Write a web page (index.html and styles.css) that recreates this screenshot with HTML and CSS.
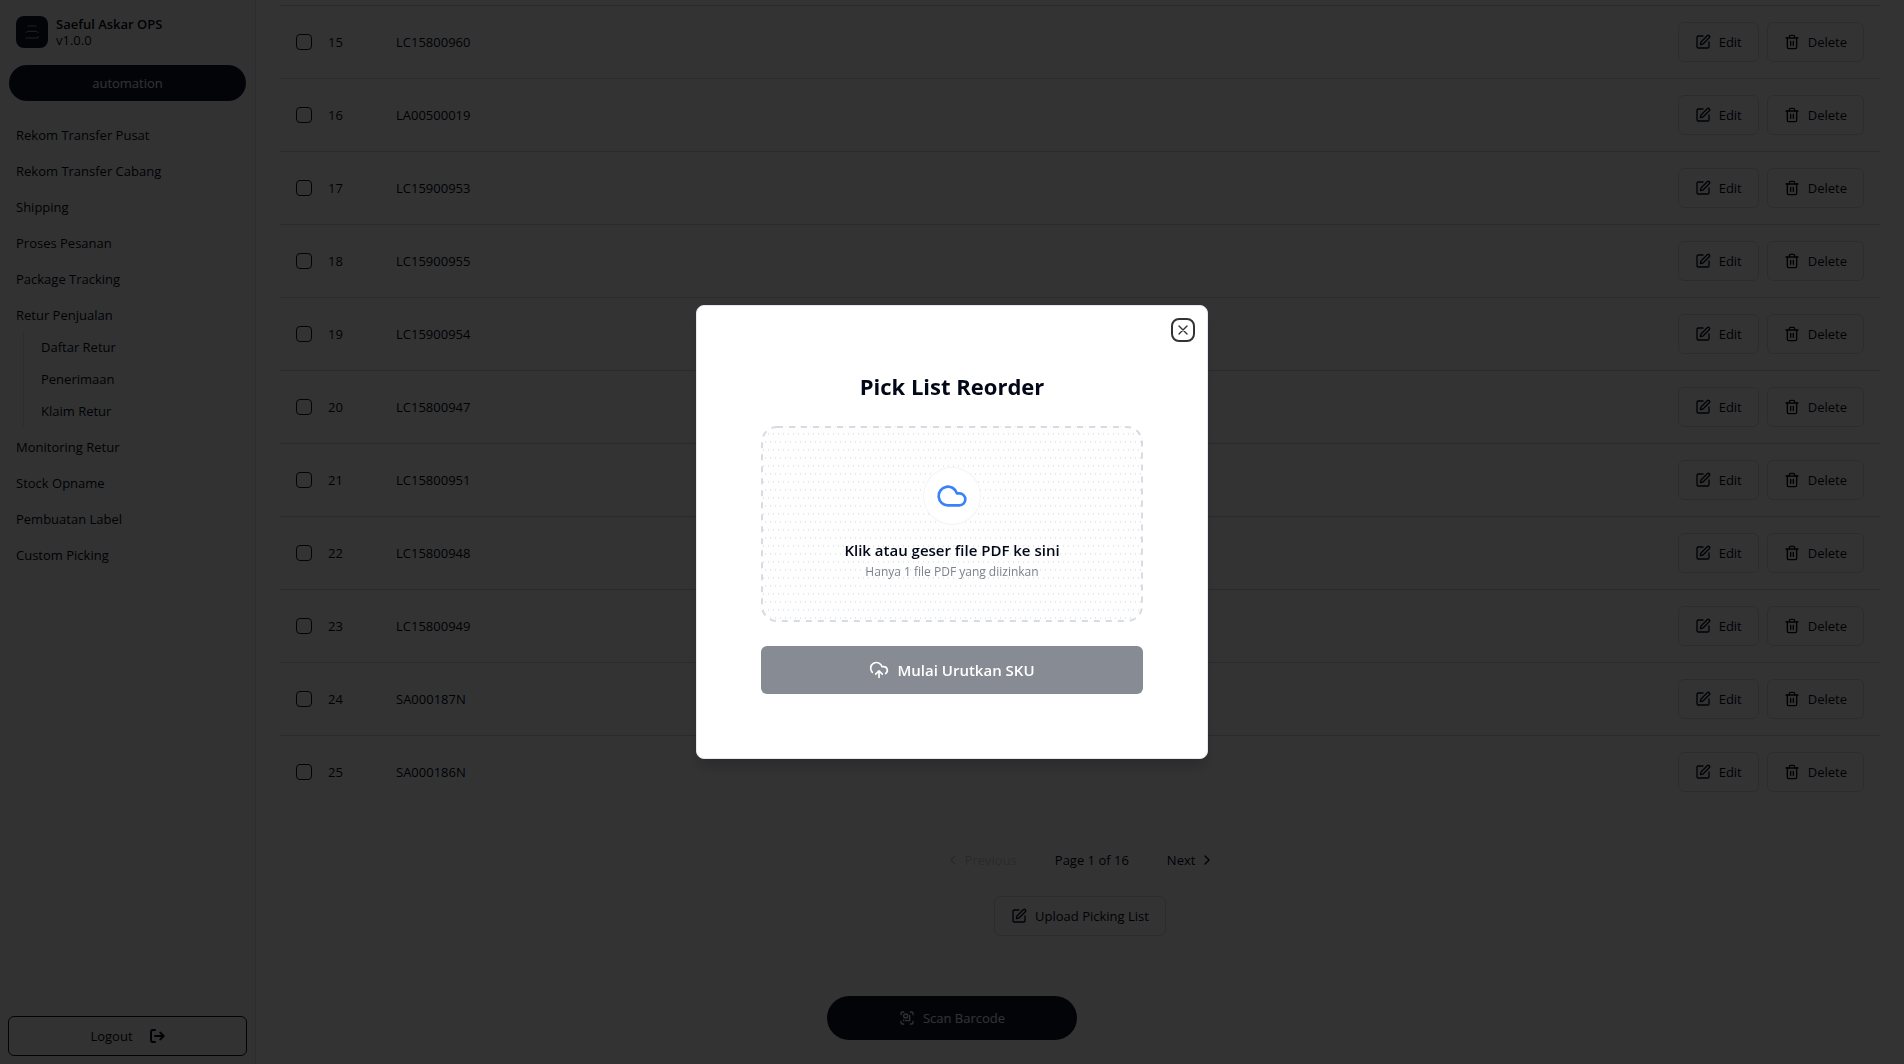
FILE: index.html
```html
<!DOCTYPE html>
<html lang="id">
<head>
    <meta charset="UTF-8">
    <meta name="viewport" content="width=device-width, initial-scale=1.0">
    <title>Saeful Askar OPS</title>
    <link rel="stylesheet" href="styles.css">
</head>
<body>

    <!-- Shared icons -->
    <svg class="sprite" aria-hidden="true">
        <symbol id="icon-edit" viewBox="0 0 24 24">
            <path d="M12 3H5a2 2 0 0 0-2 2v14a2 2 0 0 0 2 2h14a2 2 0 0 0 2-2v-7"/>
            <path d="M18.375 2.625a1 1 0 0 1 3 3l-9.013 9.014a2 2 0 0 1-.853.505l-2.873.84a.5.5 0 0 1-.62-.62l.84-2.873a2 2 0 0 1 .506-.852z"/>
        </symbol>
        <symbol id="icon-trash" viewBox="0 0 24 24">
            <path d="M3 6h18"/>
            <path d="M19 6v14c0 1-1 2-2 2H7c-1 0-2-1-2-2V6"/>
            <path d="M8 6V4c0-1 1-2 2-2h4c1 0 2 1 2 2v2"/>
            <path d="M10 11v6M14 11v6"/>
        </symbol>
    </svg>

    <div class="layout">
        <aside class="sidebar">
            <div class="brand">
                <div class="brand-icon">
                    <svg class="icon" viewBox="0 0 24 24"><path d="M6 3h12M3 13l2-2h14l2 2M3 21h18v-2"/></svg>
                </div>
                <div class="brand-text">
                    <span class="brand-name">Saeful Askar OPS</span>
                    <span>v1.0.0</span>
                </div>
            </div>
            <button type="button" class="role-btn">automation</button>

            <nav class="menu">
                <a href="#">Rekom Transfer Pusat</a>
                <a href="#">Rekom Transfer Cabang</a>
                <a href="#">Shipping</a>
                <a href="#">Proses Pesanan</a>
                <a href="#">Package Tracking</a>
                <a href="#">Retur Penjualan</a>
                <div class="submenu">
                    <a href="#">Daftar Retur</a>
                    <a href="#">Penerimaan</a>
                    <a href="#">Klaim Retur</a>
                </div>
                <a href="#">Monitoring Retur</a>
                <a href="#">Stock Opname</a>
                <a href="#">Pembuatan Label</a>
                <a href="#" class="active">Custom Picking</a>
            </nav>

            <button type="button" class="logout-btn">
                Logout
                <svg class="icon icon-bold" viewBox="0 0 24 24"><path d="M9 3H6a3 3 0 0 0-3 3v12a3 3 0 0 0 3 3h3M9 12h13M17 7l5 5-5 5"/></svg>
            </button>
        </aside>

        <main class="content">
            <table class="sku-table">
                <tbody id="sku-rows"></tbody>
            </table>

            <div class="pagination">
                <button type="button" class="page-btn" disabled>
                    <svg class="icon" viewBox="0 0 24 24"><path d="m15 18-6-6 6-6"/></svg>
                    Previous
                </button>
                <span class="page-info">Page 1 of 16</span>
                <button type="button" class="page-btn">
                    Next
                    <svg class="icon" viewBox="0 0 24 24"><path d="m9 18 6-6-6-6"/></svg>
                </button>
            </div>

            <button type="button" class="btn btn-medium upload-btn">
                <svg class="icon"><use href="#icon-edit"/></svg>
                Upload Picking List
            </button>
        </main>
    </div>

    <button type="button" class="scan-btn">
        <svg class="icon" viewBox="0 0 24 24">
            <path d="M3 7V5a2 2 0 0 1 2-2h2M17 3h2a2 2 0 0 1 2 2v2M21 17v2a2 2 0 0 1-2 2h-2M7 21H5a2 2 0 0 1-2-2v-2"/>
            <circle cx="10" cy="9" r="3"/>
            <path d="M16 8v8h-6M7 15v1"/>
        </svg>
        Scan Barcode
    </button>

    <!-- Modal -->
    <div class="overlay">
        <div class="modal" role="dialog" aria-modal="true" aria-labelledby="modal-title">
            <button type="button" class="close" aria-label="Close">
                <svg class="icon" viewBox="0 0 24 24"><path d="M18 6 6 18M6 6l12 12"/></svg>
            </button>
            <h2 id="modal-title">Pick List Reorder</h2>
            <label class="dropzone" for="pdf-file">
                <svg class="dash-border" aria-hidden="true"><rect/></svg>
                <span class="cloud">
                    <svg class="icon" viewBox="0 0 24 24"><path d="M17.5 19H9a7 7 0 1 1 6.71-9h1.79a4.5 4.5 0 1 1 0 9Z"/></svg>
                </span>
                <span class="drop-title">Klik atau geser file PDF ke sini</span>
                <span class="drop-hint">Hanya 1 file PDF yang diizinkan</span>
                <input type="file" id="pdf-file" accept="application/pdf" hidden>
            </label>
            <button type="button" class="submit-btn" disabled>
                <svg class="icon" viewBox="0 0 24 24"><path d="M12 13v8M4 14.899A7 7 0 1 1 15.71 8h1.79a4.5 4.5 0 0 1 2.5 8.242M8 17l4-4 4 4"/></svg>
                Mulai Urutkan SKU
            </button>
        </div>
    </div>

    <script src="script.js"></script>
</body>
</html>
```
FILE: styles.css
```css
* {
    box-sizing: border-box;
}
body {
    font-family: "Open Sans", "Noto Sans", sans-serif;
    font-size: 13px;
    line-height: 20px;
    margin: 0;
    color: #020817;
    background-color: #fff;
}
button {
    font: inherit;
    color: inherit;
    cursor: pointer;
}
a {
    color: inherit;
    text-decoration: none;
}
.sprite {
    display: none;
}
.icon {
    width: 16px;
    height: 16px;
    flex: none;
    fill: none;
    stroke: currentColor;
    stroke-width: 2;
    stroke-linecap: round;
    stroke-linejoin: round;
}
.icon-bold {
    stroke-width: 3;
}
.layout {
    display: flex;
    height: 100vh;
    overflow: hidden;
}

/* Sidebar */
.sidebar {
    width: 256px;
    flex: none;
    display: flex;
    flex-direction: column;
    padding: 8px;
    background-color: #fafafa;
    border-right: 1px solid #dcdfe4;
}
.brand {
    display: flex;
    align-items: center;
    gap: 8px;
    padding: 8px;
}
.brand-icon {
    width: 32px;
    height: 32px;
    display: flex;
    align-items: center;
    justify-content: center;
    background-color: #0f172a;
    color: #fafafa;
    border-radius: 8px;
}
.brand-icon .icon {
    stroke-width: 1;
}
.brand-text {
    display: flex;
    flex-direction: column;
    line-height: 16px;
}
.brand-name {
    font-weight: 600;
}
.role-btn {
    height: 36px;
    margin: 9px 1px 18px;
    border: none;
    border-radius: 18px;
    background-color: #0f172a;
    color: #f8fafc;
}
.menu {
    flex: 1;
    display: flex;
    flex-direction: column;
    gap: 4px;
}
.menu a {
    padding: 6px 8px;
    border-radius: 6px;
}
.menu .active {
    background-color: #f8f8f8;
    font-weight: 500;
}
.submenu {
    display: flex;
    flex-direction: column;
    gap: 4px;
    margin: -4px 15px 0;
    padding: 2px 9px;
    border-left: 1px solid #dcdfe4;
}
.menu .submenu a {
    padding: 4px 8px;
}
.logout-btn {
    height: 40px;
    display: flex;
    align-items: center;
    justify-content: center;
    gap: 16px;
    background: none;
    border: 1px solid #0f172a;
    border-radius: 6px;
}

/* Table */
.content {
    flex: 1;
    display: flex;
    flex-direction: column;
    align-items: center;
    padding: 5px 24px 24px;
}
.sku-table {
    width: 100%;
    border-collapse: separate;
    border-spacing: 0;
    border-top: 1px solid #d3d7dd;
}
.sku-table td {
    height: 73px;
    padding: 0 16px 0 0;
    border-bottom: 1px solid #d3d7dd;
}
.sku-table tr:last-child td {
    height: 72px;
    border-bottom: none;
}
.sku-table .cell-check {
    width: 48px;
    padding-left: 16px;
}
.sku-table .cell-no {
    width: 68px;
}
.sku-table .cell-sku {
    font-weight: 500;
}
.sku-check {
    appearance: none;
    display: block;
    width: 16px;
    height: 16px;
    margin: 0;
    border: 1px solid #0f172a;
    border-radius: 4px;
}
.actions {
    display: flex;
    justify-content: flex-end;
    gap: 8px;
}
.btn {
    height: 40px;
    display: flex;
    align-items: center;
    gap: 8px;
    padding: 0 16px;
    background-color: #fff;
    border: 1px solid #d8dce2;
    border-radius: 6px;
}
.btn-medium {
    font-weight: 500;
}

/* Pagination */
.pagination {
    display: flex;
    align-items: center;
    gap: 22px;
    margin: 32px 0 16px;
}
.page-btn {
    height: 40px;
    display: flex;
    align-items: center;
    gap: 4px;
    padding: 0 16px;
    background: none;
    border: none;
}
.page-btn:disabled {
    opacity: 0.2;
}
.scan-btn {
    position: fixed;
    left: 50%;
    bottom: 24px;
    transform: translateX(-50%);
    width: 250px;
    height: 44px;
    display: flex;
    align-items: center;
    justify-content: center;
    gap: 8px;
    border: none;
    border-radius: 22px;
    background-color: #0f172a;
    color: #f8fafc;
}

/* Modal */
.overlay {
    position: fixed;
    inset: 0;
    display: flex;
    align-items: center;
    justify-content: center;
    background-color: rgba(0, 0, 0, 0.8);
}
.modal {
    position: relative;
    width: 100%;
    max-width: 512px;
    padding: 64px;
    background-color: #fff;
    border: 1px solid #e2e8f0;
    border-radius: 8px;
    box-shadow: 0 10px 15px -3px rgba(0, 0, 0, 0.2);
}
.close {
    position: absolute;
    top: 16px;
    right: 16px;
    display: flex;
    padding: 0;
    border: none;
    border-radius: 4px;
    background: none;
    color: #333;
    outline: 2px solid #333;
    outline-offset: 2px;
}
.modal h2 {
    margin: 0 0 24px;
    font-size: 22px;
    line-height: 32px;
    font-weight: 700;
    text-align: center;
}
.dropzone {
    position: relative;
    display: flex;
    flex-direction: column;
    align-items: center;
    padding: 42px 16px 40px;
    border-radius: 16px;
    background-color: #fefefe;
    background-image: radial-gradient(circle, #e6e9ee 0.5px, transparent 1px), radial-gradient(circle, #e6e9ee 0.5px, transparent 1px);
    background-size: 5px 16px;
    background-position: 0 0, 2px 8px;
    cursor: pointer;
}
.dash-border {
    position: absolute;
    inset: 0;
    width: 100%;
    height: 100%;
}
.dash-border rect {
    x: 1px;
    y: 1px;
    width: calc(100% - 2px);
    height: calc(100% - 2px);
    rx: 15px;
    fill: none;
    stroke: #d7dbe2;
    stroke-width: 2;
    stroke-dasharray: 6 6;
}
.cloud {
    display: flex;
    padding: 12px;
    margin-bottom: 14px;
    border-radius: 50%;
    background-color: #fff;
    box-shadow: 0 0 0 1px #f3f4f6;
    color: #3b82f6;
}
.cloud .icon {
    width: 32px;
    height: 32px;
}
.drop-title {
    font-size: 15px;
    line-height: 24px;
    font-weight: 600;
}
.drop-hint {
    font-size: 12px;
    line-height: 20px;
    color: #7c828d;
}
.submit-btn {
    width: 100%;
    height: 48px;
    display: flex;
    align-items: center;
    justify-content: center;
    gap: 8px;
    margin-top: 24px;
    border: none;
    border-radius: 6px;
    background-color: #878b93;
    color: #fff;
    font-size: 15px;
    font-weight: 600;
}
.submit-btn .icon {
    width: 20px;
    height: 20px;
}
```
FILE: script.js
```javascript
const skus = [
    "LC15800960", "LA00500019", "LC15900953", "LC15900955", "LC15900954", "LC15800947",
    "LC15800951", "LC15800948", "LC15800949", "SA000187N", "SA000186N"
];
const firstNumber = 15;

document.getElementById("sku-rows").innerHTML = skus.map((sku, i) => `
    <tr>
        <td class="cell-check"><input type="checkbox" class="sku-check" aria-label="Pilih ${sku}"></td>
        <td class="cell-no">${firstNumber + i}</td>
        <td class="cell-sku">${sku}</td>
        <td>
            <div class="actions">
                <button type="button" class="btn"><svg class="icon"><use href="#icon-edit"/></svg>Edit</button>
                <button type="button" class="btn btn-medium"><svg class="icon"><use href="#icon-trash"/></svg>Delete</button>
            </div>
        </td>
    </tr>`).join("");
```
